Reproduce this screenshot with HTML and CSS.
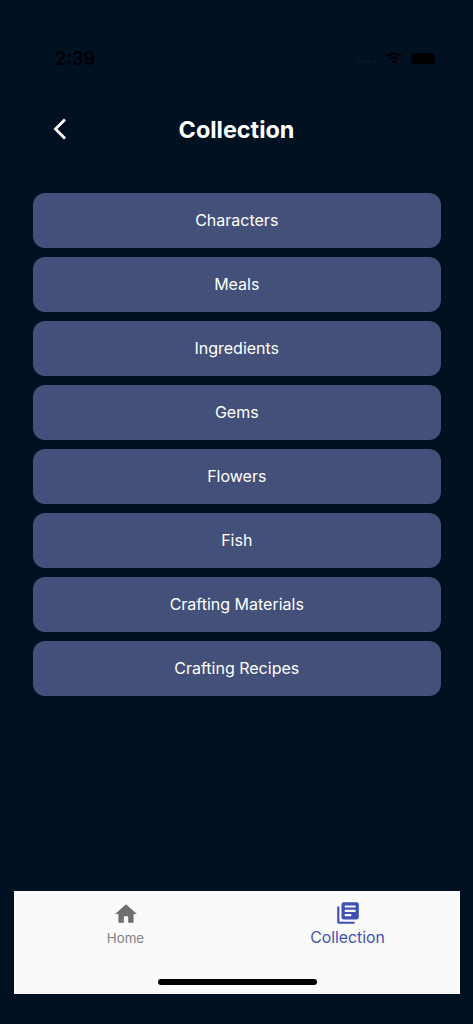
FILE: index.html
```html
<!DOCTYPE html>
<html lang="en">
<head>
<meta charset="utf-8">
<title>Collection</title>
<link rel="stylesheet" href="styles.css">
</head>
<body>
<div class="screen">
  <div class="status">
    <span class="time">2:39</span>
    <div class="status-icons">
      <div class="signal"><i></i><i></i><i></i><i></i></div>
      <svg class="wifi" viewBox="0 0 18 13"><path d="M9 2.6c2.5 0 4.8 1 6.5 2.6l1.3-1.4C14.700 1.800 12 .6 9 .6S3.300 1.800 1.200 3.800l1.300 1.400C4.200 3.600 6.500 2.600 9 2.600zM9 6.400c1.500 0 2.800.6 3.800 1.500l1.300-1.400C12.800 5.200 11 4.400 9 4.400s-3.800.8-5.100 2.100l1.300 1.400c1-.9 2.300-1.500 3.800-1.500zM9 8.500c-.9 0-1.700.3-2.300.9L9 12l2.300-2.600c-.6-.6-1.400-.9-2.300-.9z"/></svg>
      <div class="battery"></div>
    </div>
  </div>
  <header class="header">
    <svg class="back" viewBox="0 0 16 24"><path d="M13 2.500 3.500 12l9.500 9.500"/></svg>
    <h1>Collection</h1>
  </header>
  <main class="list">
    <button class="item">Characters</button>
    <button class="item">Meals</button>
    <button class="item">Ingredients</button>
    <button class="item">Gems</button>
    <button class="item">Flowers</button>
    <button class="item">Fish</button>
    <button class="item">Crafting Materials</button>
    <button class="item">Crafting Recipes</button>
  </main>
  <nav class="tabs">
    <div class="tab">
      <svg class="tab-icon home" viewBox="0 0 24 24"><path d="M10 20v-6h4v6h5v-8h3L12 3 2 12h3v8z"/></svg>
      <span class="tab-label">Home</span>
    </div>
    <div class="tab active">
      <svg class="tab-icon book" viewBox="0 0 24 24"><path d="M4 6H2v14c0 1.100.9 2 2 2h14v-2H4V6zm16-4H8c-1.100 0-2 .9-2 2v12c0 1.100.9 2 2 2h12c1.100 0 2-.9 2-2V4c0-1.100-.9-2-2-2zm-1 9H9V9h10v2zm-4 4H9v-2h6v2zm4-8H9V5h10v2z"/></svg>
      <span class="tab-label">Collection</span>
    </div>
    <div class="home-bar"></div>
  </nav>
</div>
</body>
</html>
```
FILE: styles.css
```css
* { box-sizing: border-box; }
html, body { margin: 0; padding: 0; }
body { background: #001122; font-family: Inter, "Liberation Sans", sans-serif; }
.screen { height: 1024px; display: flex; flex-direction: column; }
.status { height: 30px; margin-top: 43px; padding: 0 38px 0 55px; display: flex; align-items: center; justify-content: space-between; }
.time { font-size: 18px; font-weight: 600; color: #000; }
.status-icons { display: flex; align-items: center; gap: 8px; }
.signal { display: flex; gap: 2px; align-items: flex-end; margin-right: 1px; margin-top: 6px; }
.signal i { width: 3px; height: 3px; border-radius: 1px; background: #0a1826; }
.wifi { width: 18px; height: 13px; fill: #000; }
.battery { width: 24px; height: 11px; border-radius: 3px; background: #000; }
.header { height: 56px; margin-top: 28px; position: relative; display: flex; align-items: center; justify-content: center; }
.header h1 { margin: 0; font-size: 23.4px; font-weight: 700; color: #fff; }
.back { position: absolute; left: 52px; top: 16px; width: 16px; height: 24px; fill: none; stroke: #fff; stroke-width: 2.800; }
.list { margin-top: 36px; padding: 0 32px 0 32.500px; display: flex; flex-direction: column; gap: 9px; flex: 1; }
.item { height: 55px; border: 0; border-radius: 12px; background: #435079; color: #fff; font: 400 16px Inter, "Liberation Sans", sans-serif; padding: 0 0 2px; }
.tabs { margin: 0 13px 30px 14px; height: 103px; background: #fafafa; position: relative; display: grid; grid-template-columns: 1fr 1fr; align-items: start; }
.tab { display: flex; flex-direction: column; align-items: center; color: #808080; padding-top: 10px; }
.tab-icon { width: 26px; height: 26px; fill: #6f6f6f; }
.tab-label { font-size: 13.300px; margin-top: 3px; }
.tab.active { color: #3f51b5; padding-top: 9px; padding-right: 2px; }
.tab.active .tab-icon { fill: #3f51b5; }
.tab.active .tab-label { font-size: 15.800px; margin-top: 2px; }
.home-bar { position: absolute; left: 144px; bottom: 9px; width: 159px; height: 6px; border-radius: 3px; background: #000; }
```
